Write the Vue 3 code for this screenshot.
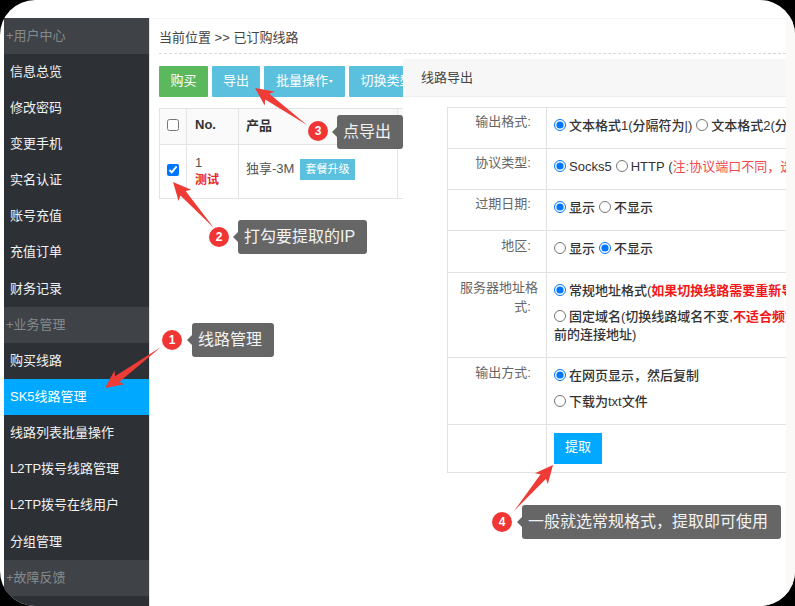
<script setup>
const menu = [
  { title: '+用户中心', items: ['信息总览', '修改密码', '变更手机', '实名认证', '账号充值', '充值订单', '财务记录'] },
  { title: '+业务管理', items: ['购买线路', 'SK5线路管理', '线路列表批量操作', 'L2TP拨号线路管理', 'L2TP拨号在线用户', '分组管理'] },
  { title: '+故障反馈', items: [] },
]

const notes = [
  { n: 1, text: '线路管理', cx: 172, cy: 340, left: 192, top: 323, width: 82 },
  { n: 2, text: '打勾要提取的IP', cx: 219, cy: 237, left: 238, top: 220, width: 129 },
  { n: 3, text: '点导出', cx: 318, cy: 131, left: 337, top: 115, width: 66 },
  { n: 4, text: '一般就选常规格式，提取即可使用', cx: 502, cy: 522, left: 522, top: 505, width: 259 },
]

// tapered arrow: thin tail widening up to a barbed head
function arrow(x1, y1, x2, y2) {
  const len = Math.hypot(x2 - x1, y2 - y1)
  const ux = (x2 - x1) / len
  const uy = (y2 - y1) / len
  const at = (along, side) => `${(x2 - ux * along - uy * side).toFixed(1)},${(y2 - uy * along + ux * side).toFixed(1)}`
  return [at(len, 0), at(15, 3.5), at(18, 8.5), at(0, 0), at(18, -8.5), at(15, -3.5)].join(' ')
}

const arrows = [
  arrow(161, 347, 105, 388),
  arrow(214, 228, 173, 182),
  arrow(307, 125, 255, 88),
  arrow(514, 511, 553, 465),
]
</script>

<template>
  <div class="frame">
    <div class="screen">
      <aside class="sidebar">
        <div v-for="group in menu" :key="group.title" class="group">
          <div class="group-title">{{ group.title }}</div>
          <div
            v-for="item in group.items"
            :key="item"
            class="menu-item"
            :class="{ active: item === 'SK5线路管理' }"
          >{{ item }}</div>
        </div>
      </aside>

      <main class="main">
        <div class="crumb">当前位置 &gt;&gt; 已订购线路</div>
        <div class="toolbar">
          <button class="btn green">购买</button>
          <button class="btn blue">导出</button>
          <button class="btn blue wide">批量操作<span class="caret"></span></button>
          <button class="btn blue switch">切换类型</button>
        </div>
        <table class="list">
          <thead>
            <tr>
              <th class="c-check"><input type="checkbox" /></th>
              <th class="c-no">No.</th>
              <th class="c-name">产品</th>
              <th></th>
            </tr>
          </thead>
          <tbody>
            <tr>
              <td class="c-check"><input type="checkbox" checked /></td>
              <td class="c-no">1<br /><span class="test">测试</span></td>
              <td class="c-name">独享-3M <span class="tag">套餐升级</span></td>
              <td></td>
            </tr>
          </tbody>
        </table>

        <section class="dialog">
          <div class="dialog-head">线路导出</div>
          <div class="dialog-body">
            <table class="form">
              <tbody>
                <tr class="r41">
                  <th>输出格式:&nbsp;&nbsp;</th>
                  <td>
                    <input type="radio" name="fmt" checked /><b>文本格式1(分隔符为|)</b>
                    <input type="radio" name="fmt" /><b>文本格式2(分隔符为,)</b>
                  </td>
                </tr>
                <tr class="r41">
                  <th>协议类型:&nbsp;&nbsp;</th>
                  <td>
                    <input type="radio" name="proto" checked /><b>Socks5</b>
                    <input type="radio" name="proto" /><b>HTTP</b> <b>(</b><span class="note">注:协议端口不同，选错无法连接</span>
                  </td>
                </tr>
                <tr class="r41">
                  <th>过期日期:&nbsp;&nbsp;</th>
                  <td>
                    <input type="radio" name="exp" checked /><b>显示</b>
                    <input type="radio" name="exp" /><b>不显示</b>
                  </td>
                </tr>
                <tr class="r42">
                  <th>地区:&nbsp;&nbsp;</th>
                  <td>
                    <input type="radio" name="area" /><b>显示</b>
                    <input type="radio" name="area" checked /><b>不显示</b>
                  </td>
                </tr>
                <tr class="r85">
                  <th>服务器地址格式:&nbsp;&nbsp;</th>
                  <td>
                    <div class="line"><input type="radio" name="addr" checked /><b>常规地址格式(<span class="warn">如果切换线路需要重新导出</span></b></div>
                    <div class="line wrap"><input type="radio" name="addr" /><b>固定域名(切换线路域名不变,<span class="warn">不适合频繁</span></b><br /><b>前的连接地址)</b></div>
                  </td>
                </tr>
                <tr class="r67">
                  <th>输出方式:&nbsp;&nbsp;</th>
                  <td>
                    <div class="line"><input type="radio" name="out" checked /><b>在网页显示，然后复制</b></div>
                    <div class="line"><input type="radio" name="out" /><b>下载为txt文件</b></div>
                  </td>
                </tr>
                <tr class="r48">
                  <th></th>
                  <td><button class="submit">提取</button></td>
                </tr>
              </tbody>
            </table>
          </div>
        </section>
      </main>

      <svg class="arrows" width="795" height="606" aria-hidden="true">
        <polygon v-for="(pts, i) in arrows" :key="i" :points="pts" fill="#ee3b36" />
      </svg>

      <template v-for="note in notes" :key="note.n">
        <span class="badge" :style="{ left: note.cx - 10 + 'px', top: note.cy - 10 + 'px' }">{{ note.n }}</span>
        <div class="tip" :style="{ left: note.left + 'px', top: note.top + 'px', width: note.width + 'px' }">{{ note.text }}</div>
      </template>
    </div>
  </div>
</template>

<style>
html,
body {
  margin: 0;
  background: #000;
}
</style>

<style scoped>
.frame {
  width: 795px;
  height: 606px;
  background: #000;
  overflow: hidden;
  font-family: "Liberation Sans", "Noto Sans CJK SC", sans-serif;
  font-size: 13px;
  color: #333;
}

.screen {
  position: relative;
  display: flex;
  height: 100%;
  box-sizing: border-box;
  padding: 18px 0 0 4px;
  background: #fff;
  border-radius: 35px;
  overflow: hidden;
}

.sidebar {
  width: 145px;
  flex: none;
  background: #2d3136;
  border-right: 1px solid #e4e4e4;
}

.group-title {
  height: 36px;
  line-height: 35px;
  padding-left: 2px;
  background: #3f4347;
  color: #85898c;
  font-size: 13px;
}

.menu-item {
  height: 36.1px;
  line-height: 35px;
  padding-left: 6px;
  color: #f2f2f2;
  font-size: 13px;
}

.group:nth-child(2) .menu-item {
  height: 36.2px;
}

.menu-item.active {
  background: #00a9ff;
  color: #fff;
}

.main {
  flex: 1;
  min-width: 0;
  padding-left: 9px;
  overflow: hidden;
  border-top: 1px solid #f4f4f4;
  border-right: 9px solid #fbf9f7;
}

.crumb {
  height: 34px;
  line-height: 37px;
  border-bottom: 1px dashed #d8d8d8;
  color: #444;
  font-size: 13px;
  white-space: nowrap;
}

.toolbar {
  display: flex;
  gap: 4px;
  margin-top: 12px;
}

.btn {
  width: 49px;
  height: 31px;
  flex: none;
  padding: 0 0 4px;
  border: 0;
  border-radius: 1px;
  color: #fff;
  font: inherit;
  font-size: 13px;
}

.btn.green {
  background: #5cb85c;
}

.btn.blue {
  width: 48px;
  background: #5bc0de;
}

.btn.wide {
  width: 81px;
}

.btn.switch {
  width: 75px;
}

.caret {
  display: inline-block;
  margin-left: 1px;
  vertical-align: middle;
  border-top: 3px solid #fff;
  border-left: 2px solid transparent;
  border-right: 2px solid transparent;
}

.list {
  width: 245px;
  margin-top: 11px;
  border-collapse: collapse;
  table-layout: fixed;
}

.list th,
.list td {
  border: 1px solid #e4e4e4;
  text-align: left;
  vertical-align: middle;
}

.list thead tr {
  height: 36px;
  background: #fafafa;
}

.list tbody tr {
  height: 54px;
}

.list th {
  font-size: 13px;
  padding: 0 8px 4px;
}

.list td {
  padding: 0 8px;
  color: #555;
}

.list .c-check {
  width: 12px;
  padding: 0 7px 4px;
}

.list td.c-check {
  padding-bottom: 3px;
}

.list .c-no {
  width: 35px;
  line-height: 17px;
}

.list .c-name {
  width: 143px;
  padding-left: 7px;
  white-space: nowrap;
}

.list td.c-name {
  vertical-align: top;
  padding-top: 13px;
}

.list input {
  display: block;
  margin: 0;
}

.list th.c-check input,
.list td.c-check input {
  width: 12px;
  height: 12px;
}

.test {
  color: #e8291f;
  font-weight: bold;
  font-size: 12px;
}

.tag {
  display: inline-block;
  margin-left: 2px;
  padding: 0 5.5px;
  line-height: 21px;
  background: #5bc0de;
  color: #fff;
  font-size: 11px;
  vertical-align: middle;
}

.dialog {
  position: absolute;
  left: 403px;
  right: 9px;
  top: 59px;
  bottom: 0;
  background: #fff;
  overflow: hidden;
}

.dialog-head {
  height: 37px;
  line-height: 38px;
  padding-left: 18px;
  background: #f7f7f7;
  border-bottom: 1px solid #eee;
  font-size: 13px;
  color: #444;
}

.dialog-body {
  padding: 10px 0 0 44px;
}

.form {
  width: 339px;
  border-collapse: collapse;
  table-layout: fixed;
}

.form th,
.form td {
  border: 1px solid #e2e2e2;
  vertical-align: top;
  font-size: 13px;
}

.form th {
  width: 90px;
  padding: 5px 8px 0 0;
  text-align: right;
  font-weight: normal;
  color: #666;
  line-height: 19px;
}

.form .r41 th {
  padding-top: 4px;
}

.form td {
  padding: 9px 0 0 7px;
  border-right: 0;
  white-space: nowrap;
  overflow: hidden;
  line-height: 18px;
}

.form b {
  font-weight: 500;
  color: #333;
}

.form input {
  width: 12px;
  height: 12px;
  margin: 0 3px 0 0;
  vertical-align: -1px;
}

.form b + input {
  margin-left: 4px;
}

.r41 { height: 41px; }
.r42 { height: 42px; }
.r85 { height: 85px; }
.r67 { height: 67px; }
.r48 { height: 48px; }

.line {
  margin-bottom: 8px;
}

.line.wrap {
  margin-bottom: 0;
}

.note {
  color: #f0494f;
}

.warn {
  color: #f01818;
  font-weight: bold;
}

.submit {
  display: block;
  width: 48px;
  height: 31px;
  margin-top: -1px;
  padding: 0 0 4px;
  border: 0;
  background: #00a9ff;
  color: #fff;
  font: inherit;
  font-size: 13px;
}

.arrows {
  position: absolute;
  left: 0;
  top: 0;
  pointer-events: none;
}

.badge {
  position: absolute;
  width: 20px;
  height: 20px;
  border-radius: 50%;
  background: #f03535;
  color: #fff;
  text-align: center;
  line-height: 20px;
  font-size: 12px;
  font-weight: bold;
}

.tip {
  position: absolute;
  box-sizing: border-box;
  height: 34px;
  padding-left: 6px;
  line-height: 34px;
  background: #666;
  border-radius: 3px;
  color: #f2f2f2;
  font-size: 16px;
  white-space: nowrap;
}

.tip::before {
  content: '';
  position: absolute;
  left: -5px;
  top: 12px;
  border-top: 5px solid transparent;
  border-bottom: 5px solid transparent;
  border-right: 5px solid #666;
}
</style>
